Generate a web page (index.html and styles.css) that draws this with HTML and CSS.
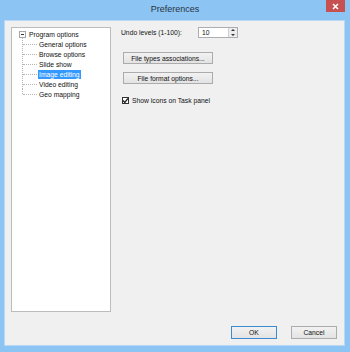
FILE: index.html
```html
<!DOCTYPE html>
<html>
<head>
<meta charset="utf-8">
<link rel="stylesheet" href="styles.css">
</head>
<body>
<div class="window">
  <div class="titlebar">
    <span class="title">Preferences</span>
    <div class="close"><svg width="7" height="7" viewBox="0 0 7 7"><path d="M1 1L6 6M6 1L1 6" stroke="#fff" stroke-width="1.6"/></svg></div>
  </div>
  <div class="client">
    <div class="main">
      <div class="tree">
        <div class="root"><span class="expander"><span class="minus"></span></span><span class="label">Program options</span></div>
        <ul class="children">
          <li><span class="label">General options</span></li>
          <li><span class="label">Browse options</span></li>
          <li><span class="label">Slide show</span></li>
          <li><span class="label selected">Image editing</span></li>
          <li><span class="label">Video editing</span></li>
          <li><span class="label">Geo mapping</span></li>
        </ul>
      </div>
      <div class="panel">
        <div class="row">
          <span class="field-label">Undo levels (1-100):</span>
          <div class="spin"><span class="spin-value">10</span><span class="spin-btns"><span class="spin-up"></span><span class="spin-down"></span></span></div>
        </div>
        <button class="btn wide first">File types associations...</button>
        <button class="btn wide second">File format options...</button>
        <label class="check-row"><span class="checkbox"><svg width="7" height="7" viewBox="0 0 7 7"><path d="M1 3.5L2.8 5.4L6 1.3" stroke="#222" stroke-width="1.3" fill="none"/></svg></span><span>Show icons on Task panel</span></label>
      </div>
    </div>
    <div class="footer">
      <button class="btn dlg default">OK</button>
      <button class="btn dlg">Cancel</button>
    </div>
  </div>
</div>
</body>
</html>
```
FILE: styles.css
```css
* { box-sizing: border-box; }
html, body { margin: 0; padding: 0; }
body {
  width: 350px;
  height: 352px;
  background: #8cc4f4;
  font-family: "Liberation Sans", Arial, sans-serif;
  overflow: hidden;
}
.window {
  display: flex;
  flex-direction: column;
  height: 352px;
}
.titlebar {
  height: 20px;
  position: relative;
  display: flex;
  justify-content: center;
  align-items: center;
  padding-bottom: 2px;
}
.title {
  font-size: 9px;
  color: #2a3440;
}
.close {
  position: absolute;
  right: 5px;
  top: 0;
  width: 19px;
  height: 12px;
  background: #c75050;
  display: flex;
  align-items: center;
  justify-content: center;
}
.close svg { display: block; }
.client {
  flex: 1;
  margin: 0 5px 6px 4px;
  background: #f0f0f0;
  border: 1px solid #b9d8f5;
  display: flex;
  flex-direction: column;
  padding: 6px 7px 6px 6px;
  font-size: 6.75px;
  color: #111;
}
.main {
  flex: 1;
  display: flex;
  gap: 10px;
}
.tree {
  width: 100px;
  background: #fff;
  border: 1px solid #bcbcbc;
  padding-top: 1px;
}
.root {
  height: 10px;
  display: flex;
  align-items: center;
}
.expander {
  width: 7px;
  height: 7px;
  margin-left: 7px;
  margin-right: 2px;
  border: 1px solid #a6a6a6;
  background: #fbfbfb;
  display: flex;
  align-items: center;
  justify-content: center;
}
.minus {
  width: 3px;
  height: 1px;
  background: #333;
}
.label {
  line-height: 9px;
  padding: 0 1px;
  white-space: nowrap;
}
.selected {
  background: #3399ff;
  color: #fff;
}
.children {
  list-style: none;
  margin: 0 0 0 10px;
  padding: 0;
}
.children li {
  position: relative;
  height: 10px;
  display: flex;
  align-items: center;
  padding-left: 16px;
}
.children li::before {
  content: "";
  position: absolute;
  left: 0;
  top: -1px;
  height: 11px;
  border-left: 1px dotted #b4b4b4;
}
.children li:last-child::before {
  height: 6px;
}
.children li::after {
  content: "";
  position: absolute;
  left: 1px;
  top: 5px;
  width: 14px;
  border-top: 1px dotted #b4b4b4;
}
.panel {
  display: flex;
  flex-direction: column;
  align-items: flex-start;
}
.row {
  display: flex;
  align-items: center;
  height: 11px;
}
.field-label {
  width: 77px;
}
.spin {
  width: 40px;
  height: 11px;
  border: 1px solid #abadb3;
  background: #fff;
  display: flex;
  align-items: center;
}
.spin-value {
  flex: 1;
  padding-left: 3px;
}
.spin-btns {
  width: 9px;
  height: 9px;
  display: flex;
  flex-direction: column;
  border-left: 1px solid #d0d0d0;
  background: #ececec;
}
.spin-up, .spin-down {
  flex: 1;
  display: flex;
  align-items: center;
  justify-content: center;
}
.spin-up::before {
  content: "";
  border-left: 2px solid transparent;
  border-right: 2px solid transparent;
  border-bottom: 2px solid #333;
}
.spin-down::before {
  content: "";
  border-left: 2px solid transparent;
  border-right: 2px solid transparent;
  border-top: 2px solid #333;
}
.btn {
  font-family: inherit;
  font-size: 6.75px;
  color: #111;
  border: 1px solid #acacac;
  background: linear-gradient(#f2f2f2, #e3e3e3);
  padding: 0;
  margin: 0;
  border-radius: 0;
  display: flex;
  align-items: center;
  justify-content: center;
}
.wide {
  width: 90px;
  height: 12px;
  margin-left: 2px;
}
.first { margin-top: 14px; }
.second { margin-top: 8px; }
.check-row {
  display: flex;
  align-items: center;
  margin-top: 13px;
  margin-left: 1px;
  gap: 3px;
}
.checkbox {
  width: 7px;
  height: 7px;
  border: 1px solid #333;
  background: #fff;
  display: flex;
  align-items: center;
  justify-content: center;
}
.checkbox svg { display: block; flex: none; }
.footer {
  margin-top: 14px;
  display: flex;
  justify-content: flex-end;
  gap: 14px;
}
.dlg {
  width: 46px;
  height: 13px;
}
.default {
  border-color: #3c8ad0;
}
```
